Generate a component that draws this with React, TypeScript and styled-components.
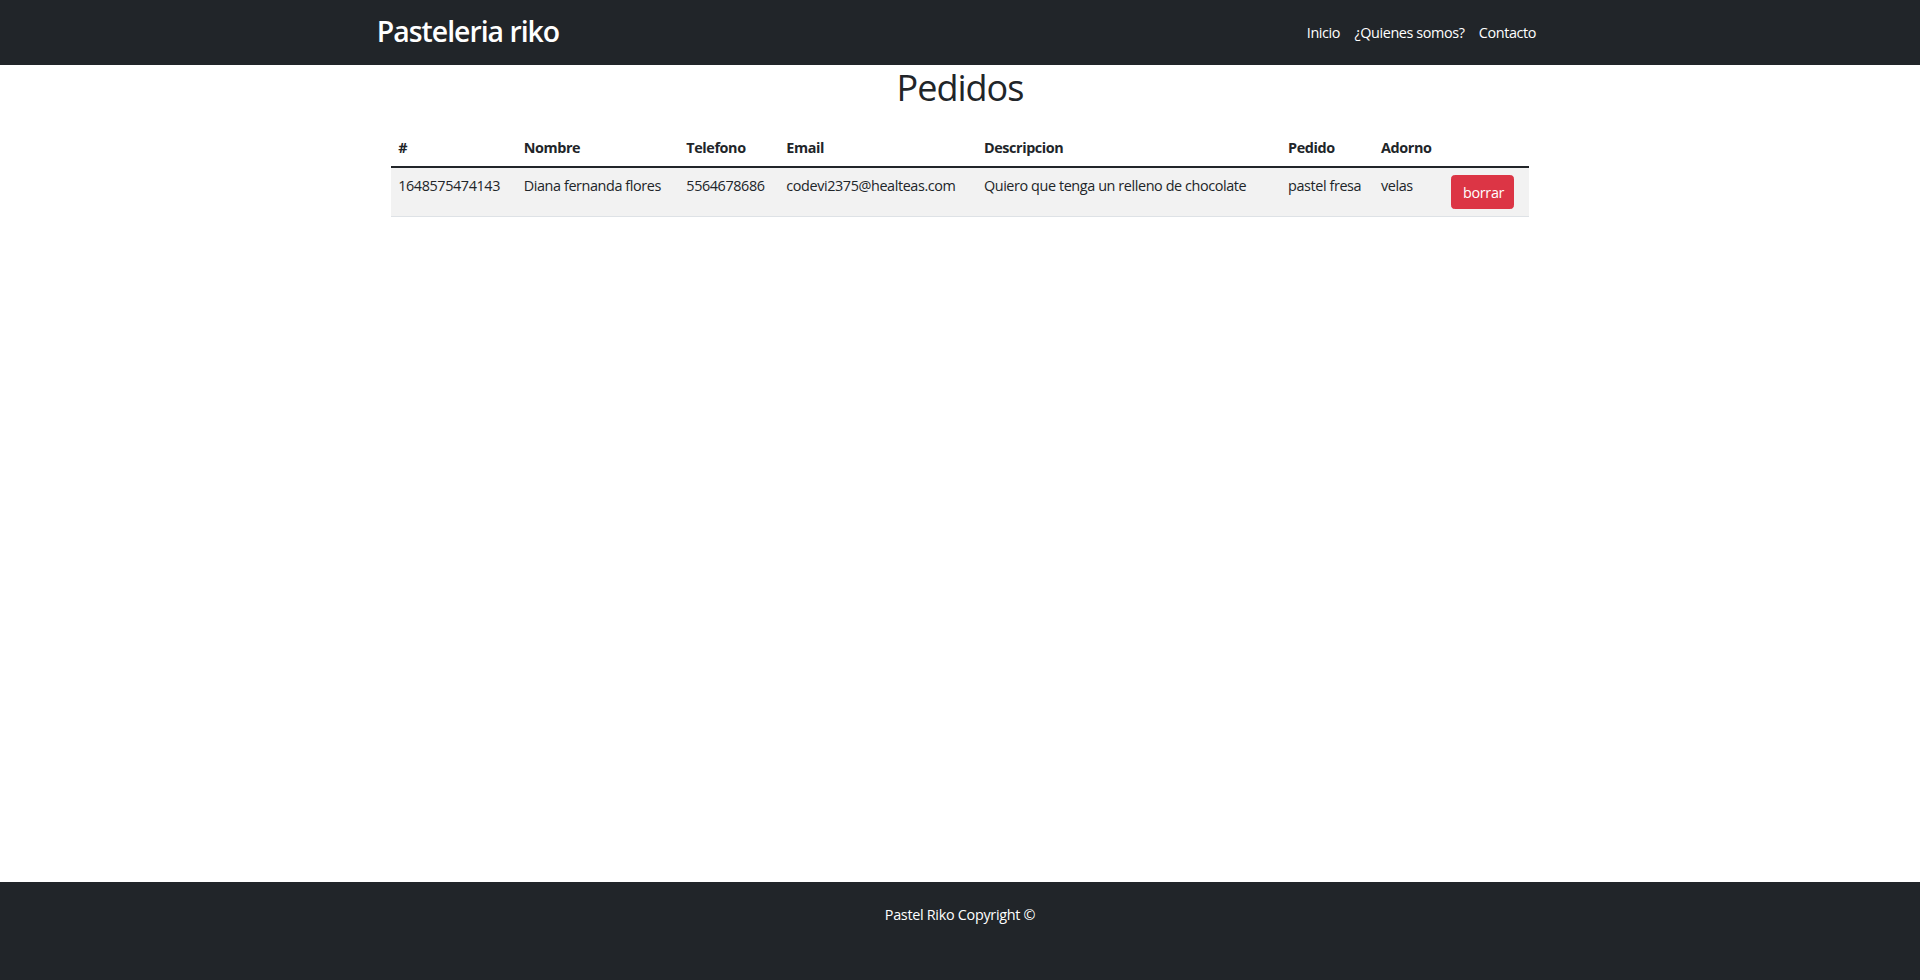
import React from "react";
import styled, { createGlobalStyle } from "styled-components";

const GlobalStyle = createGlobalStyle`
  html, body { margin: 0; padding: 0; }
  body {
    font-family: "Open Sans", "Noto Sans", sans-serif;
    font-size: 14.4px;
    line-height: 1.5;
    color: #212529;
    background: #fff;
  }
  * { box-sizing: border-box; }
`;

const Page = styled.div`
  min-height: 100vh;
  display: flex;
  flex-direction: column;
`;

const NavBar = styled.nav`
  background: #212529;
  height: 65px;
  display: flex;
  align-items: center;
`;

const NavContainer = styled.div`
  width: 1188px;
  margin: 0 auto;
  padding: 0 10.8px;
  display: flex;
  align-items: center;
  justify-content: space-between;
`;

const Brand = styled.a`
  color: #fff;
  font-size: 28.4px;
  font-weight: 600;
  line-height: 1.2;
  text-decoration: none;
  letter-spacing: -1px;
  margin-top: -2px;
`;

const NavList = styled.ul`
  display: flex;
  list-style: none;
  margin: 0;
  padding: 0;
`;

const NavLink = styled.a`
  display: block;
  color: #fff;
  text-decoration: none;
  padding: 7.2px;
  font-size: 14.4px;
  letter-spacing: -0.4px;
`;

const Main = styled.main`
  flex: 1;
`;

const Title = styled.h1`
  margin: 0;
  padding-top: 1px;
  text-align: center;
  font-size: 36px;
  font-weight: 500;
  line-height: 43px;
  letter-spacing: -1px;
`;

const TableWrap = styled.div`
  width: 1138px;
  margin: 21px auto 0;
`;

const Table = styled.table`
  width: 100%;
  border-collapse: collapse;
  table-layout: fixed;
  vertical-align: top;
  font-size: 14.4px;
  letter-spacing: -0.4px;
`;

const Th = styled.th`
  text-align: left;
  font-weight: 700;
  padding: 7.2px;
  line-height: 21.6px;
  border-bottom: 2px solid #212529;
  vertical-align: bottom;
`;

const Tr = styled.tr<{ $striped?: boolean }>`
  background: ${(p) => (p.$striped ? "#f2f2f2" : "transparent")};
`;

const Td = styled.td`
  padding: 7.2px;
  line-height: 21.6px;
  border-bottom: 1px solid #dee2e6;
  vertical-align: top;
  white-space: nowrap;
  overflow: hidden;
`;

const DangerButton = styled.button`
  font-family: inherit;
  font-size: 14.4px;
  line-height: 21.6px;
  color: #fff;
  background: #dc3545;
  border: 1px solid #dc3545;
  border-radius: 3.6px;
  padding: 5.4px 10.8px;
  width: 63px;
  height: 34px;
  cursor: pointer;
  letter-spacing: -0.3px;
`;

const Footer = styled.footer`
  background: #212529;
  height: 98px;
  color: #fff;
  text-align: center;
  padding-top: 22px;
  font-size: 14.4px;
  letter-spacing: -0.3px;
`;

const columns = [
  { label: "#", width: 125.5 },
  { label: "Nombre", width: 162.5 },
  { label: "Telefono", width: 100 },
  { label: "Email", width: 197.5 },
  { label: "Descripcion", width: 304 },
  { label: "Pedido", width: 93 },
  { label: "Adorno", width: 70 },
  { label: "", width: 85 },
];

const pedidos = [
  {
    id: "1648575474143",
    nombre: "Diana fernanda flores",
    telefono: "5564678686",
    email: "codevi2375@healteas.com",
    descripcion: "Quiero que tenga un relleno de chocolate",
    pedido: "pastel fresa",
    adorno: "velas",
  },
];

export default function App() {
  return (
    <Page>
      <GlobalStyle />
      <NavBar>
        <NavContainer>
          <Brand href="#">Pasteleria riko</Brand>
          <NavList>
            <li><NavLink href="#">Inicio</NavLink></li>
            <li><NavLink href="#">¿Quienes somos?</NavLink></li>
            <li><NavLink href="#">Contacto</NavLink></li>
          </NavList>
        </NavContainer>
      </NavBar>
      <Main>
        <Title>Pedidos</Title>
        <TableWrap>
          <Table>
            <colgroup>
              {columns.map((c, i) => (
                <col key={i} style={{ width: c.width }} />
              ))}
            </colgroup>
            <thead>
              <tr>
                {columns.map((c, i) => (
                  <Th key={i}>{c.label}</Th>
                ))}
              </tr>
            </thead>
            <tbody>
              {pedidos.map((p, i) => (
                <Tr key={p.id} $striped={i % 2 === 0}>
                  <Td>{p.id}</Td>
                  <Td>{p.nombre}</Td>
                  <Td>{p.telefono}</Td>
                  <Td>{p.email}</Td>
                  <Td>{p.descripcion}</Td>
                  <Td>{p.pedido}</Td>
                  <Td>{p.adorno}</Td>
                  <Td>
                    <DangerButton>borrar</DangerButton>
                  </Td>
                </Tr>
              ))}
            </tbody>
          </Table>
        </TableWrap>
      </Main>
      <Footer>Pastel Riko Copyright ©</Footer>
    </Page>
  );
}
